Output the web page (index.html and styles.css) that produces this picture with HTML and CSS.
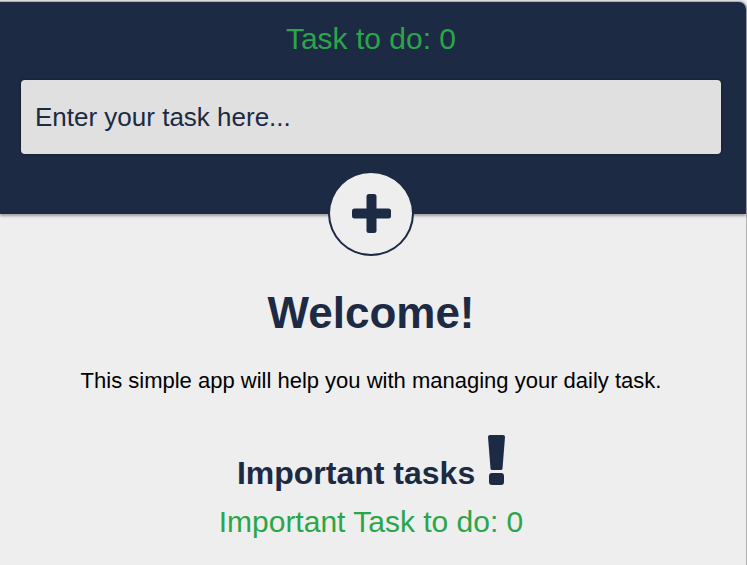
FILE: index.html
```html
<!DOCTYPE html>
<html lang="en">
<head>
<meta charset="utf-8">
<title>Todo</title>
<link rel="stylesheet" href="styles.css">
</head>
<body>
<div class="card">
  <header class="header">
    <h1 class="counter">Task to do: 0</h1>
    <input class="task-input" type="text" placeholder="Enter your task here...">
  </header>
  <main class="main">
    <button class="add-btn" type="button" aria-label="Add task">
      <svg width="39" height="39" viewBox="0 0 39 39"><rect x="0" y="14.5" width="39" height="10" rx="2.5" fill="#1c2a44"/><rect x="14.5" y="0" width="10" height="39" rx="2.5" fill="#1c2a44"/></svg>
    </button>
    <h2 class="welcome">Welcome!</h2>
    <p class="intro">This simple app will help you with managing your daily task.</p>
    <h3 class="important">Important tasks <svg class="excl" width="17" height="50" viewBox="0 0 17 50"><path d="M2 0H15Q17 0 17 2L14.5 33.5Q14.3 35 13 35H4Q2.7 35 2.5 33.5L0 2Q0 0 2 0Z" fill="#1c2a44"/><rect x="1" y="38" width="15" height="12" rx="3" fill="#1c2a44"/></svg></h3>
    <div class="important-count">Important Task to do: 0</div>
  </main>
</div>
</body>
</html>
```
FILE: styles.css
```css
html, body {
  margin: 0;
  padding: 0;
  background: #eeeeee;
  font-family: "Liberation Sans", Arial, sans-serif;
}

.card {
  width: 746px;
  margin-top: 2px;
  min-height: 600px;
  background: #eeeeee;
  border-radius: 0 7px 0 0;
  box-shadow: 0 0 2px 1px rgba(0, 0, 0, 0.35);
}

.header {
  background: #1c2a44;
  border-radius: 0 7px 0 0;
  padding: 19px 25px 60px 21px;
  box-shadow: 0 2px 3px rgba(0, 0, 0, 0.35);
  display: flex;
  flex-direction: column;
}

.counter {
  margin: 0;
  font-weight: normal;
  font-size: 30px;
  color: #2aa64a;
  text-align: center;
  line-height: 35px;
}

.task-input {
  margin-top: 24px;
  height: 74px;
  box-sizing: border-box;
  border: none;
  border-radius: 4px;
  background: #e0e0e0;
  box-shadow: 0 0 3px rgba(0, 0, 0, 0.45);
  padding: 0 14px;
  font-family: "Liberation Sans", Arial, sans-serif;
  font-size: 26px;
  color: #1c2a44;
  outline: none;
}

.task-input::placeholder {
  color: #1c2a44;
  opacity: 1;
}

.main {
  padding: 0 25px 0 21px;
  display: flex;
  flex-direction: column;
  align-items: center;
  text-align: center;
}

.add-btn {
  margin-top: -43px;
  width: 86px;
  height: 85px;
  box-sizing: border-box;
  border: 2px solid #1c2a44;
  border-radius: 50%;
  background: #eeeeee;
  padding: 0;
  display: flex;
  align-items: center;
  justify-content: center;
  cursor: pointer;
}

.welcome {
  margin: 31px 0 0;
  font-size: 44px;
  font-weight: bold;
  color: #1c2a44;
  line-height: 51px;
}

.intro {
  margin: 30px 0 0;
  font-size: 22px;
  color: #000;
  line-height: 25px;
}

.important {
  margin: 42px 0 0;
  font-size: 32px;
  font-weight: bold;
  color: #1c2a44;
  line-height: 36px;
}

.excl {
  vertical-align: -1px;
  margin-left: 4px;
}

.important-count {
  margin-top: 13px;
  font-size: 30px;
  color: #2aa64a;
  line-height: 35px;
}
```
